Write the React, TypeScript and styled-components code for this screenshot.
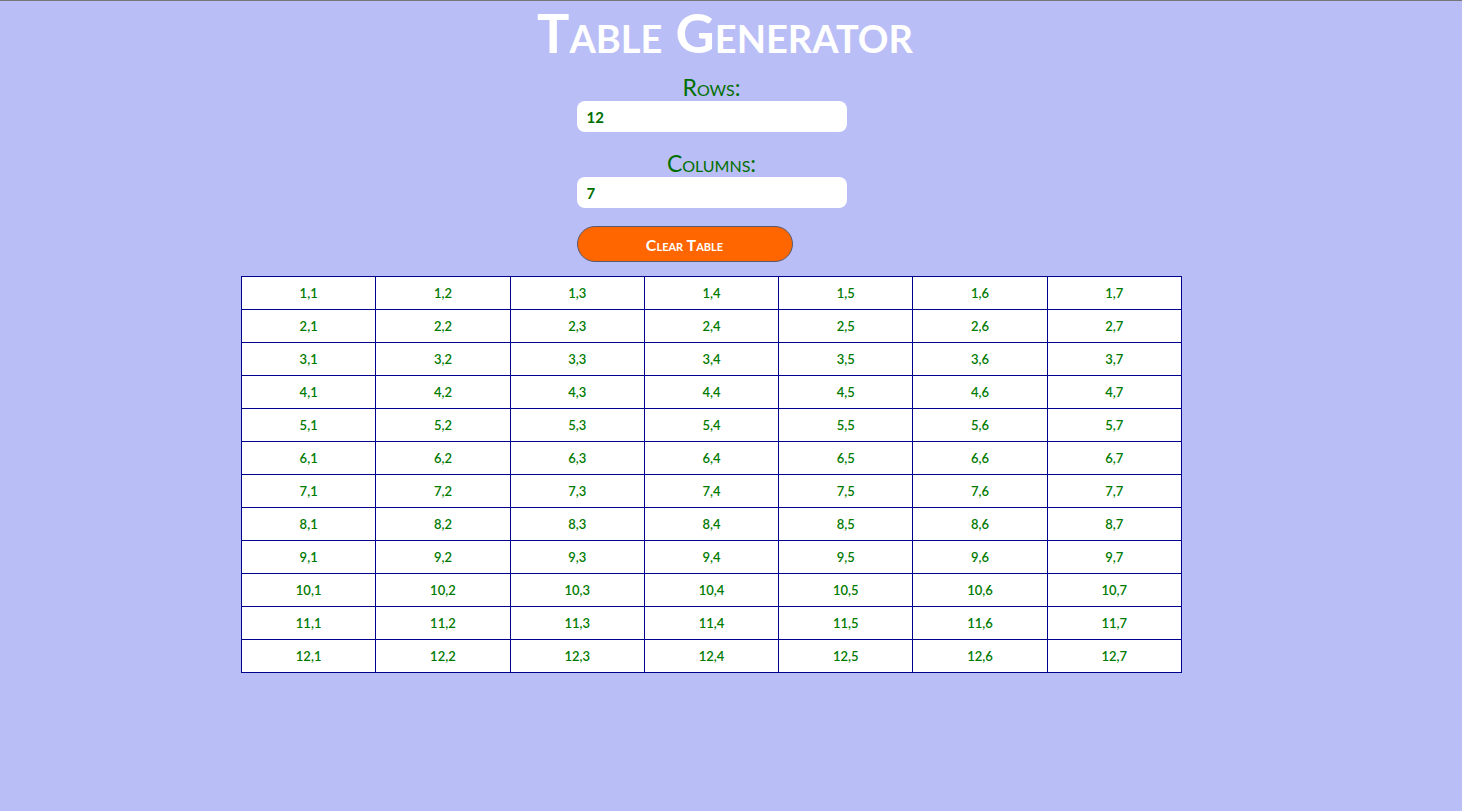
import styled, { createGlobalStyle } from 'styled-components';

const ROWS = 12;
const COLUMNS = 7;

const GlobalStyle = createGlobalStyle`
  html, body {
    margin: 0;
    padding: 0;
    background: #babef6;
  }
  body {
    min-height: 811px;
    border-top: 1px solid #767676;
    box-sizing: border-box;
    font-family: Lato, "Open Sans", sans-serif;
  }
`;

const App = () => {
  const rows = Array.from({ length: ROWS }, (_, i) => i + 1);
  const cols = Array.from({ length: COLUMNS }, (_, i) => i + 1);

  return (
    <>
      <GlobalStyle />
      <Title>Table Generator</Title>
      <Main>
        <Form>
          <Label htmlFor="rows">Rows:</Label>
          <Input id="rows" type="text" defaultValue="12" />
          <Label htmlFor="columns">Columns:</Label>
          <Input id="columns" type="text" defaultValue="7" />
          <ClearButton type="button">Clear Table</ClearButton>
        </Form>
        <Grid>
          <tbody>
            {rows.map(r => (
              <tr key={r}>
                {cols.map(c => (
                  <Cell key={c}>
                    {r},{c}
                  </Cell>
                ))}
              </tr>
            ))}
          </tbody>
        </Grid>
      </Main>
    </>
  );
};

const Title = styled.h1`
  margin: 0;
  text-align: center;
  padding-right: 12px;
  color: #ffffff;
  font-size: 54px;
  font-weight: 700;
  font-variant: small-caps;
  line-height: 64px;
`;

const Main = styled.div`
  display: flex;
  flex-direction: column;
  align-items: center;
  padding-right: 39px;
`;

const Form = styled.div`
  width: 270px;
  display: flex;
  flex-direction: column;
  align-items: stretch;
`;

const Label = styled.label`
  display: block;
  margin-top: 17px;
  text-align: center;
  color: #006f00;
  font-size: 23px;
  font-variant: small-caps;
  line-height: 28px;
  height: 28px;
  &:first-child {
    margin-top: 8px;
  }
`;

const Input = styled.input`
  height: 31px;
  box-sizing: border-box;
  border: none;
  border-radius: 8px;
  background: #ffffff;
  padding: 0 10px;
  color: #006f00;
  font-family: Lato, sans-serif;
  font-weight: 700;
  font-size: 15px;
  outline: none;
`;

const ClearButton = styled.button`
  margin-top: 18px;
  width: 216px;
  height: 36px;
  border: 1px solid #555a70;
  border-radius: 18px;
  background: #ff6600;
  color: #ffffff;
  font-family: Lato, sans-serif;
  font-weight: 700;
  font-size: 16px;
  font-variant: small-caps;
  cursor: pointer;
`;

const Grid = styled.table`
  margin-top: 14px;
  width: 941px;
  border-collapse: collapse;
  background: #ffffff;
  table-layout: fixed;
`;

const Cell = styled.td`
  height: 32px;
  padding: 0;
  border: 1px solid #00008b;
  text-align: center;
  color: #007a00;
  font-family: Lato, sans-serif;
  font-size: 13px;
  font-weight: 600;
`;

export default App;
